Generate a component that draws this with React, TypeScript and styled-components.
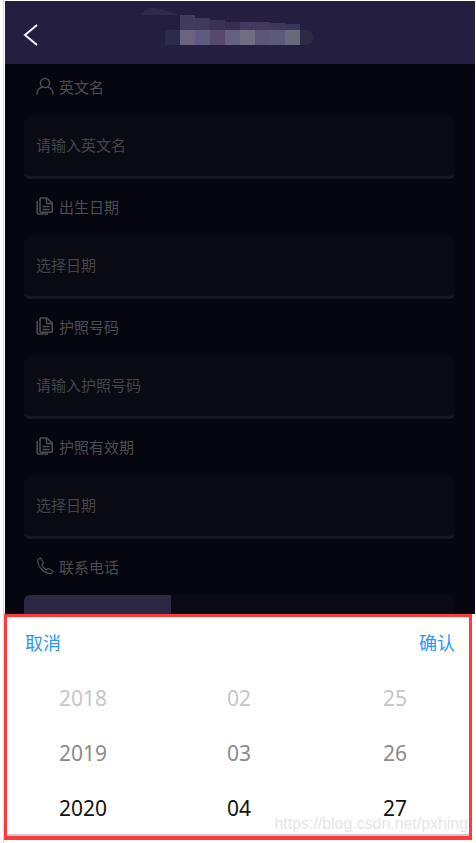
import React from 'react';
import styled, { createGlobalStyle } from 'styled-components';

const GlobalStyle = createGlobalStyle`
  html, body {
    margin: 0;
    padding: 0;
    background: #fff;
    font-family: "Noto Sans", "Noto Sans CJK SC", sans-serif;
  }
  * { box-sizing: border-box; }
`;

// Page shell
const Page = styled.div`
  position: relative;
  width: 476px;
  height: 843px;
  padding: 1px 1px 0 5px;
  background: #fff;
  overflow: hidden;
  &::before {
    content: '';
    position: absolute;
    left: 3px;
    top: 0;
    bottom: 0;
    width: 1px;
    background: #dcdcdc;
  }
`;

const Screen = styled.div`
  height: 613px;
  background: #05060f;
  overflow: hidden;
`;

const Header = styled.header`
  display: flex;
  align-items: flex-start;
  height: 63px;
  padding: 7px 0 0 18px;
  background: #241f40;
`;

const BackIcon = styled.svg`
  width: 16px;
  height: 24px;
  margin-top: 15px;
  flex: none;
`;

const TitleMosaic = styled.svg`
  width: 190px;
  height: 38px;
  margin-left: 91px;
  flex: none;
`;

const Form = styled.div`
  padding: 0 20px 0 19px;
`;

const Label = styled.div`
  display: flex;
  align-items: center;
  gap: 5px;
  height: 44px;
  padding: 0 0 0 12px;
  font-size: 15px;
  color: #4d4d51;
  svg { flex: none; }
`;

const Field = styled.div`
  display: flex;
  align-items: center;
  height: 63px;
  margin: 8px 0 5px;
  padding: 0 12px 3px;
  background: #0a0a13;
  border-bottom: 3px solid #191722;
  border-radius: 6px;
  font-size: 15px;
  color: #444448;
`;

const PhoneField = styled.div`
  display: flex;
  height: 40px;
  margin-top: 7px;
  background: #0a0a13;
  border-radius: 6px 6px 0 0;
  overflow: hidden;
`;

const AreaCode = styled.div`
  width: 147px;
  background: #2b2745;
`;

// Date picker
const Sheet = styled.section`
  position: relative;
  height: 226px;
  margin: 0 3px 0 -1px;
  background: #fff;
  border: 3px solid #ff3a3a;
  border-bottom-width: 4px;
  box-shadow: inset 0 -2px 0 #c9c9c9;
`;

const Toolbar = styled.div`
  display: flex;
  justify-content: space-between;
  align-items: center;
  height: 50px;
  padding: 0 14px 0 18px;
`;

const ToolButton = styled.button`
  padding: 0;
  border: 0;
  background: none;
  font: inherit;
  font-size: 18px;
  color: #2a96ff;
`;

const Wheel = styled.div`
  display: grid;
  grid-template-columns: 152px 160px 152px;
  grid-auto-rows: 55px;
  padding-top: 3px;
`;

const Cell = styled.div<{ $tone: string }>`
  display: flex;
  align-items: center;
  justify-content: center;
  font-family: "Noto Sans", sans-serif;
  font-size: 21px;
  color: ${props => props.$tone};
`;

const Watermark = styled.span`
  position: absolute;
  right: 1px;
  bottom: 3px;
  font-family: "Liberation Sans", sans-serif;
  font-size: 15.9px;
  white-space: nowrap;
  color: rgba(190, 190, 190, 0.42);
`;

const UserIcon = () => (
  <svg width="18" height="18" viewBox="0 0 18 18" fill="none" stroke="#4d4d51" strokeWidth="1.5">
    <circle cx="9" cy="6" r="4.6" />
    <path d="M1 17c0-4 3-6.4 5-7M17 17c0-4-3-6.4-5-7" strokeLinecap="round" />
  </svg>
);

const DocIcon = () => (
  <svg width="18" height="18" viewBox="0 0 18 18" fill="none" stroke="#4d4d51" strokeWidth="1.6">
    <path d="M1.200 4v11.500c0 .9.600 1.500 1.500 1.500h9.300" />
    <path d="M5 1h6l5.200 5.200v8c0 .6-.5 1-1 1H5c-.6 0-1-.4-1-1V2c0-.6.4-1 1-1z" />
    <path d="M10.500 1.500v5h5.500M6.500 9.500h7M6.500 12.500h7" strokeWidth="1.300" />
  </svg>
);

const PhoneIcon = () => (
  <svg width="18" height="18" viewBox="0 0 18 18" fill="none" stroke="#4d4d51" strokeWidth="1.3" strokeLinejoin="round">
    <path d="M2 2.500 4.500 1l3 5-1.800 1.800c1 2.500 2.700 4.200 4.800 5.200l1.800-1.700 4.700 3-1.500 2.200C9 17.500 .5 9 2 2.500z" />
  </svg>
);

const labelIcons = {
  user: <UserIcon />,
  doc: <DocIcon />,
  phone: <PhoneIcon />,
};

const fields = [
  { icon: 'user', label: '英文名', placeholder: '请输入英文名' },
  { icon: 'doc', label: '出生日期', placeholder: '选择日期' },
  { icon: 'doc', label: '护照号码', placeholder: '请输入护照号码' },
  { icon: 'doc', label: '护照有效期', placeholder: '选择日期' },
] as const;

const rows = [
  { tone: '#c6c6c6', values: ['2018', '02', '25'] },
  { tone: '#8b8b8b', values: ['2019', '03', '26'] },
  { tone: '#111111', values: ['2020', '04', '27'] },
];

// pixelated title, it is blurred out in the picture
const mosaic = [
  ['35', '30', '15', '15', '#2c2a4e'],
  ['50', '30', '15', '15', '#6b6480'],
  ['65', '30', '15', '15', '#5f5a80'],
  ['80', '30', '15', '15', '#56496b'],
  ['95', '30', '15', '15', '#655f82'],
  ['110', '30', '15', '15', '#736c85'],
  ['125', '30', '15', '15', '#5e5678'],
  ['140', '30', '15', '15', '#5b5a7b'],
  ['155', '30', '15', '15', '#686a7c'],
  ['50', '15', '15', '15', '#423c5c'],
  ['65', '18', '15', '12', '#403a5a'],
  ['80', '20', '15', '10', '#3a3255'],
  ['95', '22', '15', '8', '#352e50'],
  ['110', '22', '15', '8', '#433b5e'],
  ['125', '22', '15', '8', '#423a5c'],
  ['140', '23', '15', '7', '#403858'],
  ['155', '24', '15', '6', '#373758'],
];

export default function App() {
  return (
    <Page>
      <GlobalStyle />
      <Screen>
        <Header>
          <BackIcon viewBox="0 0 16 24" fill="none" stroke="#f2f2f6" strokeWidth="2">
            <path d="M14 2 2 12l12 10" />
          </BackIcon>
          <TitleMosaic viewBox="0 8 190 38">
            <path d="M11 15C15 8 22 7 30 9l20 6z" fill="#2f2a4c" />
            {mosaic.map(([x, y, width, height, fill]) => (
              <rect key={x + y} x={x} y={y} width={width} height={height} fill={fill} />
            ))}
            <path d="M170 30h6a7.500 7.500 0 0 1 0 15h-6z" fill="#2c2a45" />
          </TitleMosaic>
        </Header>
        <Form>
          {fields.map(field => (
            <React.Fragment key={field.label}>
              <Label>
                {labelIcons[field.icon]}
                {field.label}
              </Label>
              <Field>{field.placeholder}</Field>
            </React.Fragment>
          ))}
          <Label>
            {labelIcons.phone}
            联系电话
          </Label>
          <PhoneField>
            <AreaCode />
          </PhoneField>
        </Form>
      </Screen>
      <Sheet>
        <Toolbar>
          <ToolButton>取消</ToolButton>
          <ToolButton>确认</ToolButton>
        </Toolbar>
        <Wheel>
          {rows.flatMap(row =>
            row.values.map(value => (
              <Cell key={value} $tone={row.tone}>
                {value}
              </Cell>
            ))
          )}
        </Wheel>
        <Watermark>https://blog.csdn.net/pxhing</Watermark>
      </Sheet>
    </Page>
  );
}
